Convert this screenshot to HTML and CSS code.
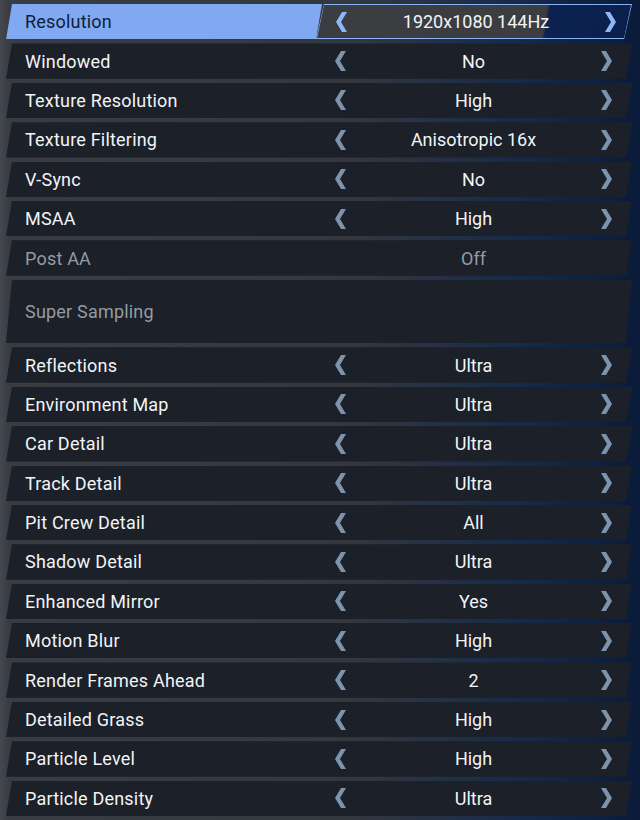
FILE: index.html
```html
<!DOCTYPE html>
<html>
<head>
<meta charset="utf-8">
<link rel="stylesheet" href="styles.css">
</head>
<body>
<div class="menu">
  <div class="row selected">
    <div class="label">Resolution</div>
    <div class="value-outline"><div class="value">
      <svg class="arr" viewBox="0 0 12 20"><polygon points="7,0 12,0 6,10 12,20 7,20 1,10"/></svg>
      <span class="val">1920x1080 144Hz</span>
      <svg class="arr" viewBox="0 0 12 20"><polygon points="5,0 0,0 6,10 0,20 5,20 11,10"/></svg>
    </div></div>
  </div>
  <div class="row"><div class="label">Windowed</div><div class="value">
    <svg class="arr" viewBox="0 0 12 20"><polygon points="7,0 12,0 6,10 12,20 7,20 1,10"/></svg><span class="val">No</span><svg class="arr" viewBox="0 0 12 20"><polygon points="5,0 0,0 6,10 0,20 5,20 11,10"/></svg></div></div>
  <div class="row"><div class="label">Texture Resolution</div><div class="value">
    <svg class="arr" viewBox="0 0 12 20"><polygon points="7,0 12,0 6,10 12,20 7,20 1,10"/></svg><span class="val">High</span><svg class="arr" viewBox="0 0 12 20"><polygon points="5,0 0,0 6,10 0,20 5,20 11,10"/></svg></div></div>
  <div class="row"><div class="label">Texture Filtering</div><div class="value">
    <svg class="arr" viewBox="0 0 12 20"><polygon points="7,0 12,0 6,10 12,20 7,20 1,10"/></svg><span class="val">Anisotropic 16x</span><svg class="arr" viewBox="0 0 12 20"><polygon points="5,0 0,0 6,10 0,20 5,20 11,10"/></svg></div></div>
  <div class="row"><div class="label">V-Sync</div><div class="value">
    <svg class="arr" viewBox="0 0 12 20"><polygon points="7,0 12,0 6,10 12,20 7,20 1,10"/></svg><span class="val">No</span><svg class="arr" viewBox="0 0 12 20"><polygon points="5,0 0,0 6,10 0,20 5,20 11,10"/></svg></div></div>
  <div class="row"><div class="label">MSAA</div><div class="value">
    <svg class="arr" viewBox="0 0 12 20"><polygon points="7,0 12,0 6,10 12,20 7,20 1,10"/></svg><span class="val">High</span><svg class="arr" viewBox="0 0 12 20"><polygon points="5,0 0,0 6,10 0,20 5,20 11,10"/></svg></div></div>
  <div class="row disabled"><div class="label">Post AA</div><div class="value">
    <span class="arr-space"></span><span class="val">Off</span><span class="arr-space"></span></div></div>
  <div class="row disabled tall"><div class="label">Super Sampling</div><div class="value"></div></div>
  <div class="row"><div class="label">Reflections</div><div class="value">
    <svg class="arr" viewBox="0 0 12 20"><polygon points="7,0 12,0 6,10 12,20 7,20 1,10"/></svg><span class="val">Ultra</span><svg class="arr" viewBox="0 0 12 20"><polygon points="5,0 0,0 6,10 0,20 5,20 11,10"/></svg></div></div>
  <div class="row"><div class="label">Environment Map</div><div class="value">
    <svg class="arr" viewBox="0 0 12 20"><polygon points="7,0 12,0 6,10 12,20 7,20 1,10"/></svg><span class="val">Ultra</span><svg class="arr" viewBox="0 0 12 20"><polygon points="5,0 0,0 6,10 0,20 5,20 11,10"/></svg></div></div>
  <div class="row"><div class="label">Car Detail</div><div class="value">
    <svg class="arr" viewBox="0 0 12 20"><polygon points="7,0 12,0 6,10 12,20 7,20 1,10"/></svg><span class="val">Ultra</span><svg class="arr" viewBox="0 0 12 20"><polygon points="5,0 0,0 6,10 0,20 5,20 11,10"/></svg></div></div>
  <div class="row"><div class="label">Track Detail</div><div class="value">
    <svg class="arr" viewBox="0 0 12 20"><polygon points="7,0 12,0 6,10 12,20 7,20 1,10"/></svg><span class="val">Ultra</span><svg class="arr" viewBox="0 0 12 20"><polygon points="5,0 0,0 6,10 0,20 5,20 11,10"/></svg></div></div>
  <div class="row"><div class="label">Pit Crew Detail</div><div class="value">
    <svg class="arr" viewBox="0 0 12 20"><polygon points="7,0 12,0 6,10 12,20 7,20 1,10"/></svg><span class="val">All</span><svg class="arr" viewBox="0 0 12 20"><polygon points="5,0 0,0 6,10 0,20 5,20 11,10"/></svg></div></div>
  <div class="row"><div class="label">Shadow Detail</div><div class="value">
    <svg class="arr" viewBox="0 0 12 20"><polygon points="7,0 12,0 6,10 12,20 7,20 1,10"/></svg><span class="val">Ultra</span><svg class="arr" viewBox="0 0 12 20"><polygon points="5,0 0,0 6,10 0,20 5,20 11,10"/></svg></div></div>
  <div class="row"><div class="label">Enhanced Mirror</div><div class="value">
    <svg class="arr" viewBox="0 0 12 20"><polygon points="7,0 12,0 6,10 12,20 7,20 1,10"/></svg><span class="val">Yes</span><svg class="arr" viewBox="0 0 12 20"><polygon points="5,0 0,0 6,10 0,20 5,20 11,10"/></svg></div></div>
  <div class="row"><div class="label">Motion Blur</div><div class="value">
    <svg class="arr" viewBox="0 0 12 20"><polygon points="7,0 12,0 6,10 12,20 7,20 1,10"/></svg><span class="val">High</span><svg class="arr" viewBox="0 0 12 20"><polygon points="5,0 0,0 6,10 0,20 5,20 11,10"/></svg></div></div>
  <div class="row"><div class="label">Render Frames Ahead</div><div class="value">
    <svg class="arr" viewBox="0 0 12 20"><polygon points="7,0 12,0 6,10 12,20 7,20 1,10"/></svg><span class="val">2</span><svg class="arr" viewBox="0 0 12 20"><polygon points="5,0 0,0 6,10 0,20 5,20 11,10"/></svg></div></div>
  <div class="row"><div class="label">Detailed Grass</div><div class="value">
    <svg class="arr" viewBox="0 0 12 20"><polygon points="7,0 12,0 6,10 12,20 7,20 1,10"/></svg><span class="val">High</span><svg class="arr" viewBox="0 0 12 20"><polygon points="5,0 0,0 6,10 0,20 5,20 11,10"/></svg></div></div>
  <div class="row"><div class="label">Particle Level</div><div class="value">
    <svg class="arr" viewBox="0 0 12 20"><polygon points="7,0 12,0 6,10 12,20 7,20 1,10"/></svg><span class="val">High</span><svg class="arr" viewBox="0 0 12 20"><polygon points="5,0 0,0 6,10 0,20 5,20 11,10"/></svg></div></div>
  <div class="row"><div class="label">Particle Density</div><div class="value">
    <svg class="arr" viewBox="0 0 12 20"><polygon points="7,0 12,0 6,10 12,20 7,20 1,10"/></svg><span class="val">Ultra</span><svg class="arr" viewBox="0 0 12 20"><polygon points="5,0 0,0 6,10 0,20 5,20 11,10"/></svg></div></div>
</div>
</body>
</html>
```
FILE: styles.css
```css
html, body {
  margin: 0;
  padding: 0;
}
body {
  width: 640px;
  height: 820px;
  overflow: hidden;
  font-family: Roboto, "Liberation Sans", sans-serif;
  background:
    linear-gradient(90deg, rgba(70,74,80,0.9) 0%, rgba(55,60,66,0.6) 1.5%, rgba(0,0,0,0) 3%),
    linear-gradient(90deg, #393d43 0%, #33383f 55%, #16294a 82%, #0a1b3a 100%);
}
.menu {
  display: flex;
  flex-direction: column;
  gap: 4px;
  padding: 4px 8px 0 6px;
}
.row {
  display: flex;
  height: 35.4px;
  background: #1b2029;
  clip-path: polygon(6px 0, 100% 0, calc(100% - 6px) 100%, 0 100%);
}
.row.tall {
  height: 63.6px;
}
.label {
  width: 312px;
  flex: none;
  display: flex;
  align-items: center;
  padding-left: 19px;
  box-sizing: border-box;
  font-size: 18px;
  color: #f2f4f6;
  letter-spacing: 0.2px;
}
.value {
  flex: 1;
  display: flex;
  align-items: center;
  justify-content: space-between;
  padding: 0 19px 0 16px;
  font-size: 18px;
  color: #f2f4f6;
}
.val {
  flex: 1;
  text-align: center;
}
.arr {
  width: 12px;
  height: 20px;
  fill: #7d93ab;
  flex: none;
}
.arr-space {
  width: 12px;
  flex: none;
}
.disabled .label,
.disabled .val {
  color: #959ba3;
}
.row.selected {
  background: transparent;
  clip-path: none;
}
.selected .label {
  background: #80a9f2;
  color: #0f1e38;
  width: 316px;
  clip-path: polygon(6px 0, 100% 0, calc(100% - 6px) 100%, 0 100%);
}
.value-outline {
  flex: 1;
  margin-left: -6px;
  background: #8ab3f5;
  clip-path: polygon(8px 0, 100% 0, calc(100% - 8px) 100%, 0 100%);
  display: flex;
  padding: 1px 1px;
  height: 35.4px;
  box-sizing: border-box;
}
.value-outline .value {
  background: linear-gradient(100deg, #3b3d41 0%, #3b3d41 72%, #0c2250 73%, #0b1f4a 100%);
  clip-path: polygon(7px 0, 100% 0, calc(100% - 7px) 100%, 0 100%);
  padding: 0 14px 0 18px;
}
.value-outline .arr {
  fill: #8fb6f7;
}
```
